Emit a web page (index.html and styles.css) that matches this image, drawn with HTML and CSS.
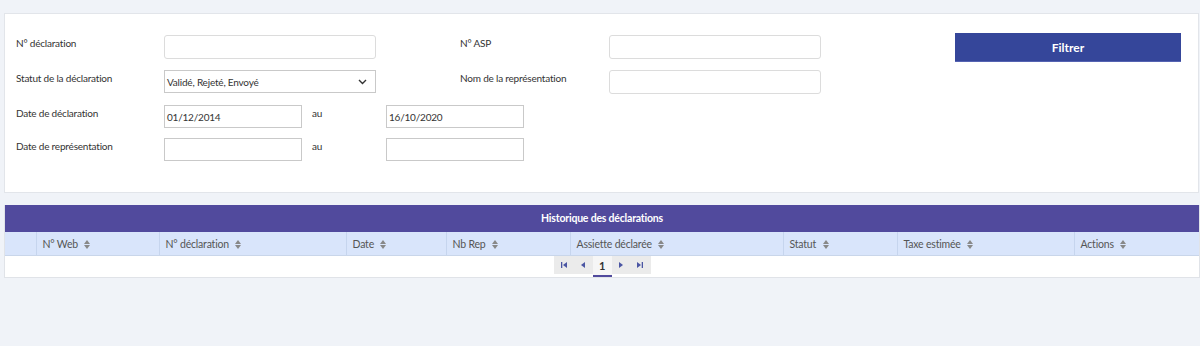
FILE: index.html
```html
<!DOCTYPE html>
<html lang="fr">
<head>
    <meta charset="UTF-8">
    <title>Historique des déclarations</title>
    <link rel="stylesheet" href="styles.css">
</head>
<body>
    <!-- Filtres -->
    <div class="filter-card">
        <div class="filter-form">
            <div class="form-row">
                <label class="field-label">N° déclaration</label>
                <div class="input wide rounded"></div>
                <label class="field-label second">N° ASP</label>
                <div class="input wide rounded"></div>
            </div>
            <div class="form-row">
                <label class="field-label">Statut de la déclaration</label>
                <div class="input wide select">
                    <span>Validé, Rejeté, Envoyé</span>
                    <svg class="chevron" width="9" height="6" viewBox="0 0 9 6">
                        <polyline points="1,1 4.5,4.5 8,1" fill="none" stroke="#333" stroke-width="1.4"/>
                    </svg>
                </div>
                <label class="field-label second">Nom de la représentation</label>
                <div class="input wide rounded tall"></div>
            </div>
            <div class="form-row">
                <label class="field-label">Date de déclaration</label>
                <div class="input date"><span>01/12/2014</span></div>
                <span class="au">au</span>
                <div class="input date"><span>16/10/2020</span></div>
            </div>
            <div class="form-row">
                <label class="field-label">Date de représentation</label>
                <div class="input date"></div>
                <span class="au">au</span>
                <div class="input date"></div>
            </div>
        </div>
        <div class="btn-filter">Filtrer</div>
    </div>

    <!-- Historique -->
    <div class="history">
        <div class="history-title">Historique des déclarations</div>
        <table class="history-table">
            <colgroup>
                <col style="width: 31px">
                <col style="width: 123px">
                <col style="width: 187px">
                <col style="width: 100px">
                <col style="width: 124px">
                <col style="width: 213px">
                <col style="width: 114px">
                <col style="width: 177px">
                <col>
            </colgroup>
            <thead>
                <tr>
                    <th></th>
                    <th>N° Web <span class="sort"></span></th>
                    <th>N° déclaration <span class="sort"></span></th>
                    <th>Date <span class="sort"></span></th>
                    <th>Nb Rep <span class="sort"></span></th>
                    <th>Assiette déclarée <span class="sort"></span></th>
                    <th>Statut <span class="sort"></span></th>
                    <th>Taxe estimée <span class="sort"></span></th>
                    <th>Actions <span class="sort"></span></th>
                </tr>
            </thead>
            <tbody>
                <tr>
                    <td colspan="9" class="pager-cell">
                        <div class="pager">
                            <span class="page-btn">
                                <svg width="6" height="6" viewBox="0 0 6 6"><rect x="0" y="0" width="1.3" height="6" fill="#4b56a3"/><polygon points="6,0 2,3 6,6" fill="#4b56a3"/></svg>
                            </span>
                            <span class="page-btn">
                                <svg width="4" height="6" viewBox="0 0 4 6"><polygon points="4,0 0,3 4,6" fill="#4b56a3"/></svg>
                            </span>
                            <span class="page-btn current">1</span>
                            <span class="page-btn">
                                <svg width="4" height="6" viewBox="0 0 4 6"><polygon points="0,0 4,3 0,6" fill="#4b56a3"/></svg>
                            </span>
                            <span class="page-btn">
                                <svg width="6" height="6" viewBox="0 0 6 6"><polygon points="0,0 4,3 0,6" fill="#4b56a3"/><rect x="4.7" y="0" width="1.3" height="6" fill="#4b56a3"/></svg>
                            </span>
                        </div>
                    </td>
                </tr>
            </tbody>
        </table>
    </div>
</body>
</html>
```

FILE: styles.css
```css
body {
    font-family: Lato, "Open Sans", Arial, sans-serif;
    font-size: 10.5px;
    letter-spacing: -0.2px;
    color: #333;
    margin: 0;
    padding: 0;
    background-color: #f0f3f8;
    height: 346px;
}

/* Filter card */
.filter-card {
    display: flex;
    align-items: flex-start;
    background-color: #fff;
    border: 1px solid #e2e5ea;
    margin: 13px 1px 0 4px;
    height: 180px;
    padding: 21px 0 0 11px;
    box-sizing: border-box;
}

.filter-form {
    display: flex;
    flex-direction: column;
}

.form-row {
    display: flex;
    align-items: flex-start;
    margin-bottom: 11px;
}

.form-row:nth-child(3) {
    margin-bottom: 10px;
}

.field-label {
    width: 148px;
    padding-top: 1px;
    line-height: 14px;
    font-size: 10px;
}

.field-label.second {
    width: 149px;
    margin-left: 84px;
}

.input {
    display: flex;
    align-items: center;
    height: 23px;
    box-sizing: border-box;
    border: 1px solid #c9c9c9;
    background-color: #fff;
    padding: 0 2px;
    font-size: 10px;
}

.input.wide {
    width: 212px;
}

.input.rounded {
    height: 24px;
    border-color: #dcdcdc;
    border-radius: 3px;
}

.input.date {
    width: 138px;
}

.input.select {
    justify-content: space-between;
    padding-right: 8px;
}

.chevron {
    display: block;
}

.au {
    width: 74px;
    margin-left: 10px;
    padding-top: 1px;
    line-height: 14px;
    font-size: 10px;
}

.btn-filter {
    margin: -2px 17px 0 auto;
    width: 226px;
    height: 29px;
    line-height: 29px;
    text-align: center;
    background-color: #35469a;
    border-bottom: 1px solid #5563b2;
    box-sizing: border-box;
    color: #fff;
    font-weight: bold;
    font-size: 12px;
    letter-spacing: 0;
}

/* History table */
.history {
    margin: 12px 0 0 4px;
    border: 1px solid #e0e3e8;
    border-top: none;
    background-color: #fff;
}

.history-title {
    background-color: #514a9d;
    color: #fff;
    font-weight: bold;
    text-align: center;
    height: 27px;
    line-height: 27px;
}

.history-table {
    width: 100%;
    border-collapse: collapse;
    table-layout: fixed;
}

.history-table th {
    background-color: #d9e5fb;
    color: #555;
    font-weight: normal;
    text-align: left;
    height: 22px;
    padding: 1px 0 0 6px;
    border-left: 1px solid #c6d5ee;
    border-bottom: 1px solid #c9d6ea;
    white-space: nowrap;
}

.history-table th:first-child {
    border-left: none;
}

.sort {
    display: inline-block;
    position: relative;
    width: 7px;
    height: 9px;
    margin-left: 4px;
    vertical-align: -1px;
}

.sort::before,
.sort::after {
    content: "";
    position: absolute;
    left: 0;
    border-left: 3.5px solid transparent;
    border-right: 3.5px solid transparent;
}

.sort::before {
    top: 0;
    border-bottom: 4px solid #888;
}

.sort::after {
    bottom: 0;
    border-top: 4px solid #888;
}

.pager-cell {
    height: 21px;
    padding: 0;
    vertical-align: top;
    text-align: center;
}

.pager {
    display: inline-flex;
    background-color: #ebebeb;
    height: 18px;
    padding: 0 1px;
}

.page-btn {
    display: flex;
    align-items: center;
    justify-content: center;
    width: 19px;
    height: 18px;
    box-sizing: border-box;
    font-size: 11px;
    color: #4b56a3;
}

.page-btn.current {
    background-color: #f6f6f6;
    color: #333;
    font-weight: bold;
    border-bottom: 2px solid #514a9d;
    height: 21px;
}
```
